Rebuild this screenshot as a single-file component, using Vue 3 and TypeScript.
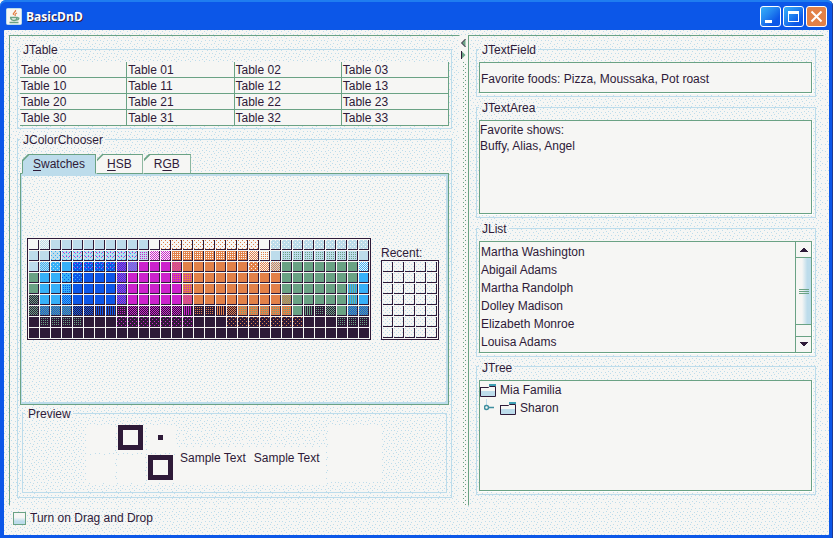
<script setup lang="ts">
import { ref } from 'vue'

interface Swatch {
  base: string
  mark: string
  pattern: string
}

const patterns: Record<string, string> = { ':': 'sparse', '/': 'checker', '|': 'stripes', '.': 'dots', '+': 'mixed' }

// Each token is "<base>", or "<base><pattern><mark>", optionally followed by "*<count>".
function parseRow(row: string): Swatch[] {
  return row.split(' ').flatMap((token) => {
    const [code, count] = token.split('*')
    const swatch: Swatch = {
      base: 'base-' + code[0],
      mark: code.length > 1 ? 'mark-' + code[2] : '',
      pattern: code.length > 1 ? patterns[code[1]] : '',
    }
    return Array.from({ length: Number(count ?? 1) }, () => swatch)
  })
}

const swatches: Swatch[] = [
  'w w/l l*9 w w:o*9 w l:w*9',
  'l*2 l:c l+c*7 l.m w/m m/w o.w*7 w/o w.o l l.g*7 l',
  'l l/c c:l c b+c*4 b/m m/c m*3 o/m o*6 o:w w/o l/o g*7 c/w',
  'g c*2 c:b b:c b*3 b/m m*4 m.o o.m o*8 g*7 c',
  'g c*2 c.b b*4 b/m m*5 o.m o*8 g*6 g|c c',
  'g/d c*2 c/b b*4 b/m m*5 o/m o*8 g/o g*5 g|c c',
  'g/d g/b*3 b/d*2 b|d d|b d.m m/d*5 m|d d.o*2 o|d o/d o.g*5 g g|d d.g d/g g g/b*2',
  'd d.g*4 d*3 d:m*7 d*3 d:o*7 d*3 d.g*3',
  'd*31',
].flatMap(parseRow)

const recentCount = 35
const rows = [0, 1, 2, 3]
const people = ['Martha Washington', 'Abigail Adams', 'Martha Randolph', 'Dolley Madison', 'Elizabeth Monroe', 'Louisa Adams']
const foods = ref('Favorite foods: Pizza, Moussaka, Pot roast')
const shows = ref('Favorite shows:\nBuffy, Alias, Angel')
const dragEnabled = ref(false)
</script>

<template>
  <div class="window">
    <header class="titlebar">
      <svg class="app-icon" width="17" height="17" viewBox="0 0 17 17" aria-hidden="true">
        <rect x="0.5" y="0.5" width="15" height="16" rx="1" fill="#f6f6f4" stroke="#bddceb" />
        <path d="M9.500 2c1 2-3.500 2.500-2 5M11 5c-2 .8-2.500 1.600-1.500 3" fill="none" stroke="#e28148" stroke-width="1.300" />
        <path d="M4 9.500h7c0 4-6 4-6.500 0M11 10c3-1 2 2-.5 2M3.500 14.500h9" fill="none" stroke="#6aa284" stroke-width="1.300" />
      </svg>
      <h1>BasicDnD</h1>
      <div class="controls">
        <button type="button" aria-label="Minimize">
          <svg width="19" height="19" viewBox="0 0 19 19"><path d="M4 13h7v3H4z" fill="#fff" /></svg>
        </button>
        <button type="button" aria-label="Maximize">
          <svg width="19" height="19" viewBox="0 0 19 19"><path d="M4 4h11v11H4zM5 7v7h9V7z" fill="#fff" fill-rule="evenodd" /></svg>
        </button>
        <button type="button" class="close" aria-label="Close">
          <svg width="19" height="19" viewBox="0 0 19 19"><path d="M4.500 4.500l10 10M14.500 4.500l-10 10" stroke="#fff" stroke-width="2" /></svg>
        </button>
      </div>
    </header>

    <main class="content dither">
      <div class="split">
        <section class="pane">
          <fieldset>
            <legend>JTable</legend>
            <table>
              <tbody>
                <tr v-for="r in rows" :key="r">
                  <td v-for="c in rows" :key="c">Table {{ r }}{{ c }}</td>
                </tr>
              </tbody>
            </table>
          </fieldset>

          <fieldset class="grow">
            <legend>JColorChooser</legend>
            <div class="tabs" role="tablist">
              <button type="button" role="tab" aria-selected="true" class="tab active"><u>S</u>watches</button>
              <button type="button" role="tab" aria-selected="false" class="tab"><u>H</u>SB</button>
              <button type="button" role="tab" aria-selected="false" class="tab">R<u>G</u>B</button>
            </div>
            <div class="tab-panel" role="tabpanel">
              <div class="swatch-grid main-grid">
                <span v-for="(s, i) in swatches" :key="i" class="swatch" :class="[s.base, s.mark, s.pattern]"></span>
              </div>
              <div class="recent">
                <span>Recent:</span>
                <div class="swatch-grid recent-grid">
                  <span v-for="i in recentCount" :key="i" class="swatch base-w mark-l sparse"></span>
                </div>
              </div>
            </div>
            <fieldset class="preview">
              <legend>Preview</legend>
              <div class="preview-body">
                <svg width="90" height="60" viewBox="0 0 90 60" aria-hidden="true">
                  <path d="M0 1h29v28H0zM31 1h28v28H31zM61 1h28v28H61zM0 31h29v28H0zM31 31h28v28H31zM61 31h28v28H61z" fill="#f6f6f4" />
                  <path d="M32 1h25v25H32zM37 6v15h15V6zM62 31h25v25H62zM67 36v15h15V36zM72 11h5v5h-5z" fill="#2e1a38" fill-rule="evenodd" />
                </svg>
                <div class="samples">
                  <span class="ghost" aria-hidden="true"></span>
                  <p><span>Sample Text</span><span>Sample Text</span></p>
                </div>
                <div class="blank"></div>
              </div>
            </fieldset>
          </fieldset>
        </section>

        <div class="divider">
          <svg width="5" height="22" viewBox="0 0 5 22" aria-hidden="true">
            <path d="M4.500 1v8L.5 5z" fill="#6aa284" />
            <path d="M4.500 1L.5 5l4 4" fill="none" stroke="#2e1a38" />
            <path d="M.5 13v8l4-4z" fill="#6aa284" />
            <path d="M.5 13v8" stroke="#2e1a38" />
          </svg>
          <div class="grip"></div>
        </div>

        <section class="pane pane-right">
          <fieldset>
            <legend id="field-label">JTextField</legend>
            <input v-model="foods" class="sunken field" type="text" aria-labelledby="field-label" />
          </fieldset>
          <fieldset class="grow">
            <legend id="area-label">JTextArea</legend>
            <textarea v-model="shows" class="sunken area" aria-labelledby="area-label"></textarea>
          </fieldset>
          <fieldset class="grow">
            <legend>JList</legend>
            <div class="sunken list">
              <ul>
                <li v-for="p in people" :key="p">{{ p }}</li>
              </ul>
              <div class="scrollbar">
                <button type="button" aria-label="Scroll up">
                  <svg width="8" height="4" viewBox="0 0 8 4"><path d="M3 0h2v1h1v1h1v1h1v1H0V3h1V2h1V1h1z" fill="#2e1a38" /></svg>
                </button>
                <div class="track"><div class="thumb"><i></i><i></i><i></i></div></div>
                <button type="button" class="down" aria-label="Scroll down">
                  <svg width="8" height="4" viewBox="0 0 8 4"><path d="M0 0h8v1H7v1H6v1H5v1H3V3H2V2H1V1H0z" fill="#2e1a38" /></svg>
                </button>
              </div>
            </div>
          </fieldset>
          <fieldset class="grow">
            <legend>JTree</legend>
            <ul class="sunken tree" role="tree">
              <li role="treeitem">
                <svg width="16" height="14" viewBox="0 0 16 14" aria-hidden="true">
                  <path d="M1 8h14v5H1z" fill="#bddceb" />
                  <path d="M.5 4v9.500h15V3.500h-6l-1 1H1" fill="none" stroke="#2e1a38" />
                  <path d="M9 1h7v2H9z" fill="#3f9fb4" />
                </svg>
                <span>Mia Familia</span>
              </li>
              <li class="child" role="treeitem">
                <svg width="12" height="18" viewBox="0 0 12 18" aria-hidden="true">
                  <path d="M2.500 0v6" stroke="#bddceb" />
                  <circle cx="2.500" cy="8.500" r="2" fill="#f6f6f4" stroke="#3f8fa0" stroke-width="1.500" />
                  <path d="M5 8.500h5" stroke="#3f8fa0" stroke-width="1.500" />
                </svg>
                <svg width="16" height="14" viewBox="0 0 16 14" aria-hidden="true">
                  <path d="M1 8h14v5H1z" fill="#bddceb" />
                  <path d="M.5 4v9.500h15V3.500h-6l-1 1H1" fill="none" stroke="#2e1a38" />
                  <path d="M9 1h7v2H9z" fill="#3f9fb4" />
                </svg>
                <span>Sharon</span>
              </li>
            </ul>
          </fieldset>
        </section>
      </div>

      <label class="drag-toggle">
        <input v-model="dragEnabled" type="checkbox" />
        <span>Turn on Drag and Drop</span>
      </label>
    </main>
  </div>
</template>

<style>
body {
  background: #f6f6f4;
}
</style>

<style scoped>
* {
  box-sizing: border-box;
}

.window {
  --w: #f6f6f4;
  --l: #bddceb;
  --g: #6aa284;
  --d: #2e1a38;
  --b: #0c57e8;
  --c: #36b0f8;
  --o: #e28148;
  --m: #cc22cc;
  display: flex;
  flex-direction: column;
  min-height: 100vh;
  padding: 0 4px 4px;
  background: var(--b);
  border-radius: 6px 6px 0 0;
  box-shadow: inset -1px -1px 0 #1c3a94, inset 0 2px 0 #1f7df0;
  color: var(--d);
  font: 12px/16px "Liberation Sans", Arial, sans-serif;
}

button,
input,
textarea {
  font: inherit;
  color: inherit;
}

ul,
p,
h1 {
  margin: 0;
  padding: 0;
  list-style: none;
}

/* Title bar */
.titlebar {
  display: flex;
  align-items: center;
  gap: 3px;
  height: 30px;
  padding: 3px 0 0 2px;
  color: #fff;
}

.titlebar h1 {
  flex: 1;
  font: bold 12px/16px "Open Sans", "Noto Sans", sans-serif;
  text-shadow: 1px 1px 0 var(--d);
}

.controls {
  display: flex;
  gap: 2px;
  padding-right: 2px;
}

.controls button {
  display: block;
  width: 21px;
  height: 21px;
  padding: 0;
  border: 1px solid #fff;
  border-radius: 3px;
  background: linear-gradient(135deg, #36b0f8, #2386f0 40%, #0c57e8 75%);
}

.controls .close {
  background: var(--o);
}

.controls svg {
  display: block;
}

/* Dithered surface */
.dither {
  --dot: conic-gradient(from 0deg at 1px 1px, transparent 75%, var(--l) 0);
  background-color: var(--w);
  background-image: var(--dot), var(--dot), var(--dot), var(--dot), var(--dot), var(--dot), var(--dot), var(--dot),
    var(--dot), var(--dot), var(--dot), var(--dot), var(--dot), var(--dot), var(--dot), var(--dot), var(--dot);
  background-size: 14px 13px;
  background-position: 0 0, 4px 1px, 7px 0, 11px 1px, 2px 3px, 6px 3px, 9px 4px, 13px 4px, 0 6px, 4px 5px, 7px 7px,
    11px 7px, 2px 8px, 5px 10px, 9px 10px, 12px 10px, 1px 11px;
}

.content {
  flex: 1;
  display: flex;
  flex-direction: column;
  padding: 5px 5px 0;
}

.split {
  flex: 1;
  display: grid;
  grid-template-columns: minmax(0, 451fr) 8px minmax(0, 356fr);
}

.pane {
  display: flex;
  flex-direction: column;
  gap: 2px;
  padding: 5px 7px 7px;
  border: 1px solid var(--w);
  border-top-color: var(--g);
  border-left-color: var(--g);
}

.pane-right {
  padding-bottom: 10px;
}

fieldset {
  display: flex;
  flex-direction: column;
  min-width: 0;
  margin: 0;
  padding: 5px 2px 2px;
  border: 1px solid var(--l);
}

legend {
  height: 16px;
  padding: 1px 2px 0 3px;
}

.grow {
  flex: 1 0 auto;
}

table {
  width: 100%;
  table-layout: fixed;
  border-collapse: separate;
  border-spacing: 0;
  background: var(--w);
}

td {
  height: 16px;
  padding: 1px 0 0 1px;
  line-height: 14px;
  border-right: 1px solid var(--g);
  border-bottom: 1px solid var(--g);
}

/* Tabs */
.tabs {
  display: flex;
  padding: 2px 2px 0;
}

.tab {
  height: 20px;
  margin-bottom: -1px;
  padding: 0 10px;
  border: 1px solid var(--g);
  background: var(--w);
  clip-path: polygon(6px 0, 100% 0, 100% 100%, 0 100%, 0 6px);
  background-image: linear-gradient(135deg, var(--g) 4px, transparent 5px);
}

.tab + .tab {
  border-left-color: var(--w);
}

.tab.active {
  border-bottom-color: var(--l);
  background-color: var(--l);
}

.tab u {
  text-underline-offset: 2px;
}

.tab-panel {
  flex: 1;
  display: flex;
  align-items: center;
  justify-content: center;
  gap: 10px;
  min-height: 232px;
  padding-right: 3px;
  border: 1px solid var(--g);
  box-shadow: inset -2px -2px 0 var(--l), inset 1px 2px 0 var(--l);
}

.swatch-grid {
  display: grid;
  grid-auto-rows: 11px;
  padding: 0 1px 1px 0;
  border: 1px solid var(--d);
  background: var(--w);
}

.main-grid {
  grid-template-columns: repeat(31, 11px);
}

.recent {
  margin-top: -17px;
  padding-top: 24px;
}

.recent > span {
  display: block;
  height: 15px;
}

.recent-grid {
  grid-template-columns: repeat(5, 11px);
}

.swatch {
  margin: 1px 0 0 1px;
  border-right: 1px solid var(--d);
  border-bottom: 1px solid var(--d);
}

.base-w { background-color: var(--w); }
.base-l { background-color: var(--l); }
.base-g { background-color: var(--g); }
.base-d { background-color: var(--d); }
.base-b { background-color: var(--b); }
.base-c { background-color: var(--c); }
.base-o { background-color: var(--o); }
.base-m { background-color: var(--m); }

.mark-w { --mark: var(--w); }
.mark-l { --mark: var(--l); }
.mark-g { --mark: var(--g); }
.mark-d { --mark: var(--d); }
.mark-b { --mark: var(--b); }
.mark-c { --mark: var(--c); }
.mark-o { --mark: var(--o); }
.mark-m { --mark: var(--m); }

.dots,
.sparse,
.mixed {
  --dot: conic-gradient(from 0deg at 1px 1px, transparent 75%, var(--mark) 0);
}

.dots {
  background-image: var(--dot);
  background-size: 2px 2px;
  background-position: 1px 1px;
}

.sparse {
  background-image: var(--dot), var(--dot);
  background-size: 4px 4px;
  background-position: 2px 2px, 4px 4px;
}

.mixed {
  background-image: conic-gradient(from 0deg at 1px 1px, transparent 75%, var(--m) 0), var(--dot), var(--dot);
  background-size: 3px 4px, 4px 4px, 4px 4px;
  background-position: 1px 1px, 2px 2px, 0 0;
}

.checker {
  background-image: repeating-conic-gradient(var(--mark) 0 25%, transparent 0 50%);
  background-size: 2px 2px;
}

.stripes {
  background-image: linear-gradient(90deg, var(--mark) 50%, transparent 50%);
  background-size: 2px 2px;
}

/* Preview */
.preview {
  margin: 0 2px 2px;
  padding: 3px 3px 7px 2px;
}

.preview-body {
  display: flex;
  justify-content: center;
}

.samples {
  width: 150px;
  margin-right: 2px;
}

.ghost {
  display: block;
  height: 11px;
  margin: 8px 4px 4px;
  border: 2px dotted var(--w);
}

.samples p {
  display: flex;
  gap: 8px;
  height: 38px;
  padding: 3px 0 0 4px;
  background: var(--w);
}

.blank {
  width: 54px;
  height: 57px;
  margin-top: 1px;
  background: var(--w);
}

/* Divider */
.divider {
  display: flex;
  flex-direction: column;
  align-items: center;
  padding: 3px 2px 0 1px;
  background: var(--w);
}

.grip {
  flex: 1;
  width: 4px;
  margin-top: 2px;
  --dot: conic-gradient(from 0deg at 1px 1px, transparent 75%, var(--g) 0);
  background-image: var(--dot), var(--dot);
  background-size: 4px 4px;
  background-position: 1px 0, 3px 2px;
}

/* Right-hand controls */
.sunken {
  margin: 0 1px 1px 0;
  border: 1px solid var(--g);
  border-radius: 0;
  background: var(--w);
  box-shadow: 1px 1px 0 #fff;
  outline: none;
}

.grow .sunken {
  flex: 1;
}

.field {
  height: 31px;
  padding: 2px 1px 0;
}

.area {
  display: block;
  min-height: 94px;
  padding: 1px 0;
  resize: none;
}

.list {
  display: flex;
  min-height: 111px;
}

.list ul {
  flex: 1;
  padding: 1px;
}

.list li {
  height: 18px;
  line-height: 18px;
}

.list li:last-child {
  height: 17px;
}

.scrollbar {
  display: flex;
  flex-direction: column;
  width: 16px;
  border-left: 1px solid var(--g);
}

.scrollbar button {
  display: flex;
  align-items: center;
  justify-content: center;
  width: 100%;
  height: 16px;
  padding: 0;
  border: 0;
  border-bottom: 1px solid var(--g);
  background: var(--w);
}

.scrollbar .down {
  border-top: 1px solid var(--g);
  border-bottom: 0;
}

.track {
  flex: 1;
}

.thumb {
  display: flex;
  flex-direction: column;
  justify-content: center;
  gap: 1px;
  height: 67px;
  padding: 0 2px 0 3px;
  border-bottom: 1px solid var(--g);
  background: linear-gradient(90deg, var(--w) 40%, var(--l) 75%);
}

.thumb i {
  height: 1px;
  background: var(--g);
}

.tree {
  min-height: 111px;
}

.tree li {
  display: flex;
  align-items: center;
  gap: 4px;
  height: 18px;
}

.tree .child {
  padding-left: 4px;
}

/* Footer */
.drag-toggle {
  display: flex;
  align-items: center;
  gap: 4px;
  height: 29px;
  padding: 0 0 5px 4px;
}

.drag-toggle input {
  appearance: none;
  width: 13px;
  height: 13px;
  margin: 0;
  border: 1px solid var(--g);
  background: linear-gradient(var(--w) 40%, var(--l) 75%);
}

.drag-toggle input:checked {
  background: var(--g);
}
</style>
